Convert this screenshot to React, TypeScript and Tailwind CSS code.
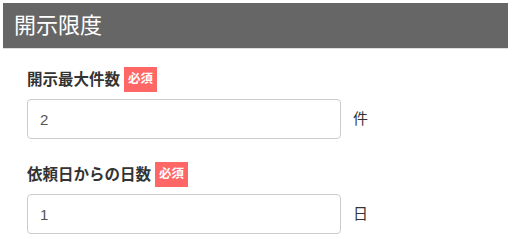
const font = { fontFamily: '"Liberation Sans", "Noto Sans CJK JP", sans-serif' };

type FieldProps = {
  label: string;
  value: string;
  unit: string;
};

const Field = ({ label, value, unit }: FieldProps) => {
  return (
    <div className="flex flex-col">
      <div className="flex items-center gap-[4px] h-[25px] mb-[7px]">
        <span className="text-[15.5px] font-bold text-[#333] leading-none">
          {label}
        </span>
        <span className="h-[25px] px-[4px] flex items-center bg-[#ff6666] text-white text-[12.5px] font-bold leading-none">
          必須
        </span>
      </div>
      <div className="flex items-center gap-[12px]">
        <input
          readOnly
          value={value}
          className="w-[314px] h-[40px] px-[12px] border border-[#ccc] rounded-[4px] text-[15px] text-[#555] outline-none"
          style={font}
        />
        <span className="text-[15px] text-[#333]">{unit}</span>
      </div>
    </div>
  );
};

const App = () => {
  return (
    <div className="w-[513px] h-[241px] bg-white pt-[3px] pl-[3px] pr-[5px]" style={font}>
      <div className="h-[46px] bg-[#666666] border-b border-[#dddddd] flex items-center pl-[11px]">
        <h1 className="text-[22px] text-white font-normal leading-none">
          開示限度
        </h1>
      </div>
      <div className="flex flex-col gap-[23px] pl-[24px] pt-[18px]">
        <Field label="開示最大件数" value="2" unit="件" />
        <Field label="依頼日からの日数" value="1" unit="日" />
      </div>
    </div>
  );
};

export default App;
